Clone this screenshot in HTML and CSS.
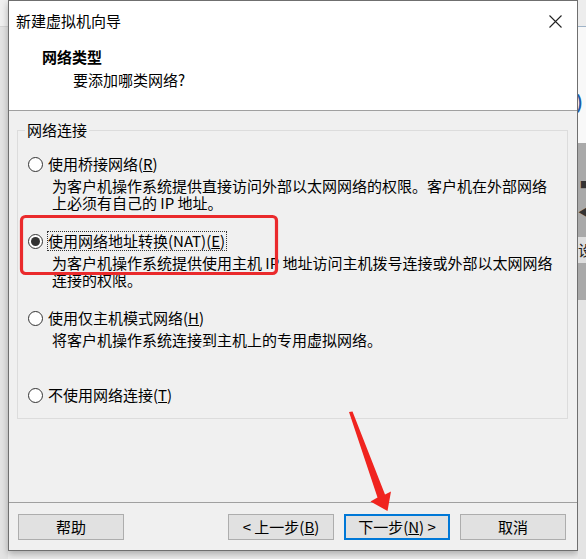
FILE: index.html
```html
<!DOCTYPE html>
<html lang="zh-CN">
<head>
    <meta charset="UTF-8">
    <meta name="viewport" content="width=device-width, initial-scale=1.0">
    <title>新建虚拟机向导</title>
    <link rel="stylesheet" href="styles.css">
</head>
<body>
    <div class="screen">
        <div class="edge-left">
            <div class="edge-left-top"></div>
        </div>

        <div class="wizard">
            <div class="wizard-head">
                <div class="titlebar">
                    <span class="title">新建虚拟机向导</span>
                    <svg class="close" width="13" height="13" viewBox="0 0 13 13">
                        <path d="M0.5 0.5 L12.5 12.5 M12.5 0.5 L0.5 12.5" stroke="#222" stroke-width="1.1" fill="none"/>
                    </svg>
                </div>
                <div class="step-title">网络类型</div>
                <div class="step-sub">要添加哪类网络?</div>
            </div>

            <div class="wizard-body">
                <fieldset class="group">
                    <legend>网络连接</legend>

                    <div class="option">
                        <div class="option-label"><span class="radio"></span><span>使用桥接网络(<u>R</u>)</span></div>
                        <p class="desc">为客户机操作系统提供直接访问外部以太网网络的权限。客户机在外部网络<br>上必须有自己的 IP 地址。</p>
                    </div>

                    <div class="option">
                        <div class="option-label"><span class="radio checked"></span><span class="focused">使用网络地址转换(NAT)(<u>E</u>)</span></div>
                        <p class="desc">为客户机操作系统提供使用主机 IP 地址访问主机拨号连接或外部以太网网络<br>连接的权限。</p>
                    </div>

                    <div class="option">
                        <div class="option-label"><span class="radio"></span><span>使用仅主机模式网络(<u>H</u>)</span></div>
                        <p class="desc">将客户机操作系统连接到主机上的专用虚拟网络。</p>
                    </div>

                    <div class="option option-last">
                        <div class="option-label"><span class="radio"></span><span>不使用网络连接(<u>T</u>)</span></div>
                    </div>
                </fieldset>
            </div>

            <div class="wizard-foot">
                <button class="btn">帮助</button>
                <div class="nav">
                    <button class="btn">&lt; 上一步(<u>B</u>)</button>
                    <button class="btn btn-default">下一步(<u>N</u>) &gt;</button>
                    <button class="btn">取消</button>
                </div>
            </div>
        </div>

        <div class="edge-right">
            <div class="er-top"></div>
            <div class="er-line"></div>
            <div class="er-pane"><span class="er-glyph">)</span></div>
            <div class="er-gray">
                <span class="er-mark mark-1">■</span>
                <span class="er-mark mark-2">◀</span>
                <span class="er-text">设</span>
            </div>
            <div class="er-rest"></div>
        </div>

        <!-- annotation overlay: red box + arrow -->
        <svg class="marks" width="586" height="559" viewBox="0 0 586 559">
            <rect x="21.5" y="216.5" width="255" height="57" rx="4" fill="none" stroke="#ea2a2c" stroke-width="3.2"/>
            <polygon points="349,412 352.5,411.5 385,494.5 391,491.5 387.5,511 370.5,501.5 377.5,497.5" fill="#f0241f"/>
        </svg>
    </div>
</body>
</html>
```

FILE: styles.css
```css
body {
    margin: 0;
    font-family: "Noto Sans CJK SC", "Noto Sans", sans-serif;
    font-size: 15px;
    color: #000;
    background: #ececec;
}
.screen {
    position: relative;
    display: flex;
    width: 586px;
    height: 559px;
    overflow: hidden;
}

/* bits of the desktop around the dialog */
.edge-left {
    width: 8px;
    background: #e3e3e3;
}
.edge-left-top {
    height: 26px;
    background: #f0f0f0;
    border-bottom: 1px solid #d4d4d4;
}
.edge-right {
    flex: 1;
    display: flex;
    flex-direction: column;
    overflow: hidden;
}
.er-top {
    height: 26px;
    background: #ededed;
}
.er-line {
    height: 1px;
    background: #9fb3c7;
}
.er-pane {
    height: 116px;
    background: #f8f8f8;
}
.er-glyph {
    display: block;
    margin: 64px 0 0 -2px;
    color: #1d5ca6;
    font-size: 18px;
    font-weight: bold;
    line-height: 20px;
}
.er-gray {
    height: 157px;
    background: #a9a9a9;
    display: flex;
    flex-direction: column;
    align-items: flex-start;
}
.er-mark {
    color: #333;
    font-size: 9px;
    line-height: 10px;
}
.mark-1 {
    margin: 37px 0 0 2px;
}
.mark-2 {
    margin: 17px 0 0 0;
    font-size: 10px;
}
.er-text {
    margin: 20px 0 0 0;
    width: 8px;
    background: #dedede;
    color: #222;
    line-height: 26px;
    font-size: 15px;
}
.er-rest {
    flex: 1;
    background: #e4e4e4;
}

/* dialog */
.wizard {
    width: 568px;
    height: 549px;
    border: 1px solid #6f6f6f;
    display: flex;
    flex-direction: column;
    background: #f0f0f0;
    box-shadow: 0 3px 7px rgba(0, 0, 0, 0.28);
}
.wizard-head {
    height: 109px;
    background: #fff;
    border-bottom: 1px solid #a0a0a0;
}
.titlebar {
    height: 40px;
    display: flex;
    align-items: center;
    justify-content: space-between;
    padding: 0 15px 0 7px;
}
.title {
    line-height: 20px;
}
.step-title {
    margin: 6px 0 0 33px;
    font-weight: bold;
    line-height: 20px;
}
.step-sub {
    margin: 3px 0 0 64px;
    line-height: 20px;
}

.wizard-body {
    flex: 1;
    padding: 10px 9px 0 8px;
}
.group {
    margin: 0;
    padding: 15px 10px 13px 10px;
    border: 1px solid #dcdcdc;
    min-width: 0;
}
.group legend {
    margin-left: -3px;
    padding: 0 2px;
    line-height: 18px;
}
.option {
    height: 77px;
}
.option-last {
    height: auto;
}
.option-label {
    display: flex;
    align-items: center;
    height: 20px;
    line-height: 18px;
}
.radio {
    box-sizing: border-box;
    width: 15px;
    height: 15px;
    margin-right: 5px;
    border: 1px solid #333;
    border-radius: 50%;
    background: #fff;
    display: flex;
    align-items: center;
    justify-content: center;
}
.radio.checked::after {
    content: "";
    width: 9px;
    height: 9px;
    border-radius: 50%;
    background: #333;
}
.focused {
    outline: 1px dotted #333;
    outline-offset: 0;
    padding: 0 1px 0 0;
}
.desc {
    margin: 4px 0 0 24px;
    line-height: 16.5px;
    white-space: nowrap;
}

.wizard-foot {
    display: flex;
    justify-content: space-between;
    border-top: 1px solid #a0a0a0;
    padding: 11px 11px 10px 9px;
}
.nav {
    display: flex;
    gap: 10px;
}
.btn {
    box-sizing: border-box;
    width: 106px;
    height: 26px;
    padding: 0;
    border: 1px solid #adadad;
    background: #e1e1e1;
    font-family: inherit;
    font-size: 15px;
    color: #000;
    line-height: 22px;
}
.btn-default {
    border: 2px solid #0078d7;
}

.marks {
    position: absolute;
    top: 0;
    left: 0;
    pointer-events: none;
}
```
